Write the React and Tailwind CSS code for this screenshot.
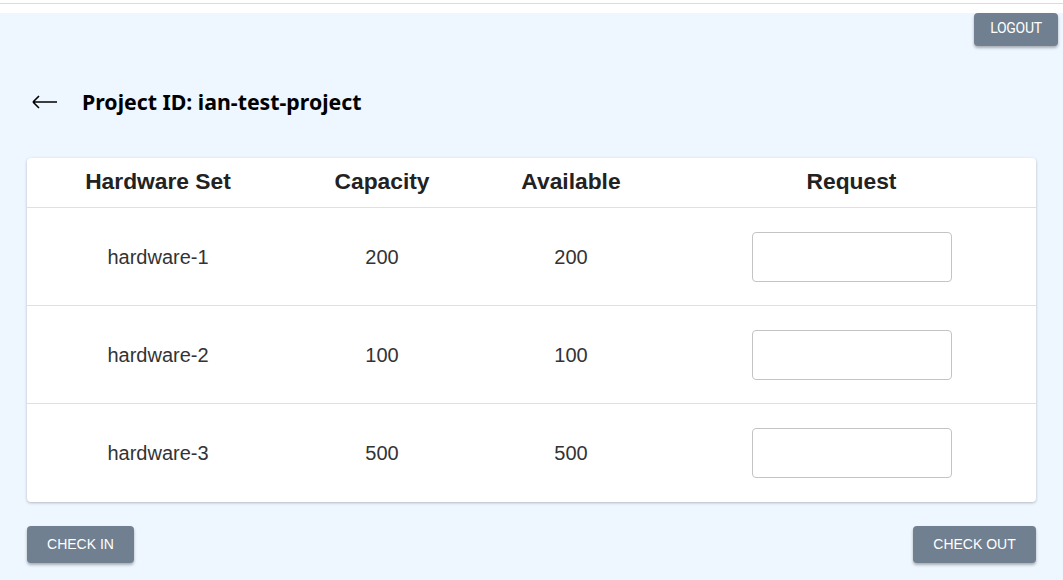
const rows = [
  { name: 'hardware-1', capacity: 200, available: 200 },
  { name: 'hardware-2', capacity: 100, available: 100 },
  { name: 'hardware-3', capacity: 500, available: 500 },
];

function ActionButton({ children, className = '' }) {
  return (
    <button
      className={`bg-[#708090] text-white rounded shadow-[0_2px_3px_rgba(0,0,0,0.3)] uppercase ${className}`}
    >
      {children}
    </button>
  );
}

export default function App() {
  return (
    <div className="w-[1063px] h-[580px] overflow-hidden bg-white font-['Liberation_Sans',Arial,sans-serif]">
      <div className="h-[13px] pt-[3px]">
        <div className="h-px bg-[#dcdcdc]" />
      </div>
      <div className="bg-[#eef6ff] h-[567px] px-[27px]">
        <div className="flex justify-end -mr-[22px]">
          <ActionButton className="w-[84px] h-[33px] pb-[2px] text-[14px] font-['Roboto',sans-serif] tracking-[-0.3px]">
            Logout
          </ActionButton>
        </div>

        <div className="flex items-center h-[40px] mt-[36px] ml-[5px]">
          <svg width="26" height="14" viewBox="0 0 26 14" className="text-black">
            <path d="M1 7 H25 M1 7 L7 1 M1 7 L7 13" stroke="currentColor" strokeWidth="1.6" fill="none" />
          </svg>
          <h1 className="ml-[24px] text-[21.3px] font-bold text-black font-['Noto_Sans','Open_Sans',sans-serif]">
            Project ID: ian-test-project
          </h1>
        </div>

        <div className="mt-[36px] bg-white rounded shadow-[0_1px_3px_rgba(0,0,0,0.25)]">
          <div className="grid grid-cols-[262px_186px_192px_1fr] h-[50px] pb-[2px] items-center border-b border-[#e0e0e0] text-[22.8px] font-bold text-[#222]">
            <div className="text-center">Hardware Set</div>
            <div className="text-center">Capacity</div>
            <div className="text-center">Available</div>
            <div className="text-center">Request</div>
          </div>
          {rows.map((r, i) => (
            <div
              key={r.name}
              className={`grid grid-cols-[262px_186px_192px_1fr] h-[98px] items-center text-[20px] text-[#333] ${
                i < rows.length - 1 ? 'border-b border-[#e0e0e0]' : ''
              }`}
            >
              <div className="text-center">{r.name}</div>
              <div className="text-center">{r.capacity}</div>
              <div className="text-center">{r.available}</div>
              <div className="flex justify-center">
                <input className="w-[200px] h-[50px] border border-[#c4c4c4] rounded px-3 outline-none" />
              </div>
            </div>
          ))}
        </div>

        <div className="flex justify-between mt-[24px]">
          <ActionButton className="w-[107px] h-[37px] text-[14px]">Check In</ActionButton>
          <ActionButton className="w-[123px] h-[37px] text-[14px]">Check Out</ActionButton>
        </div>
      </div>
    </div>
  );
}
